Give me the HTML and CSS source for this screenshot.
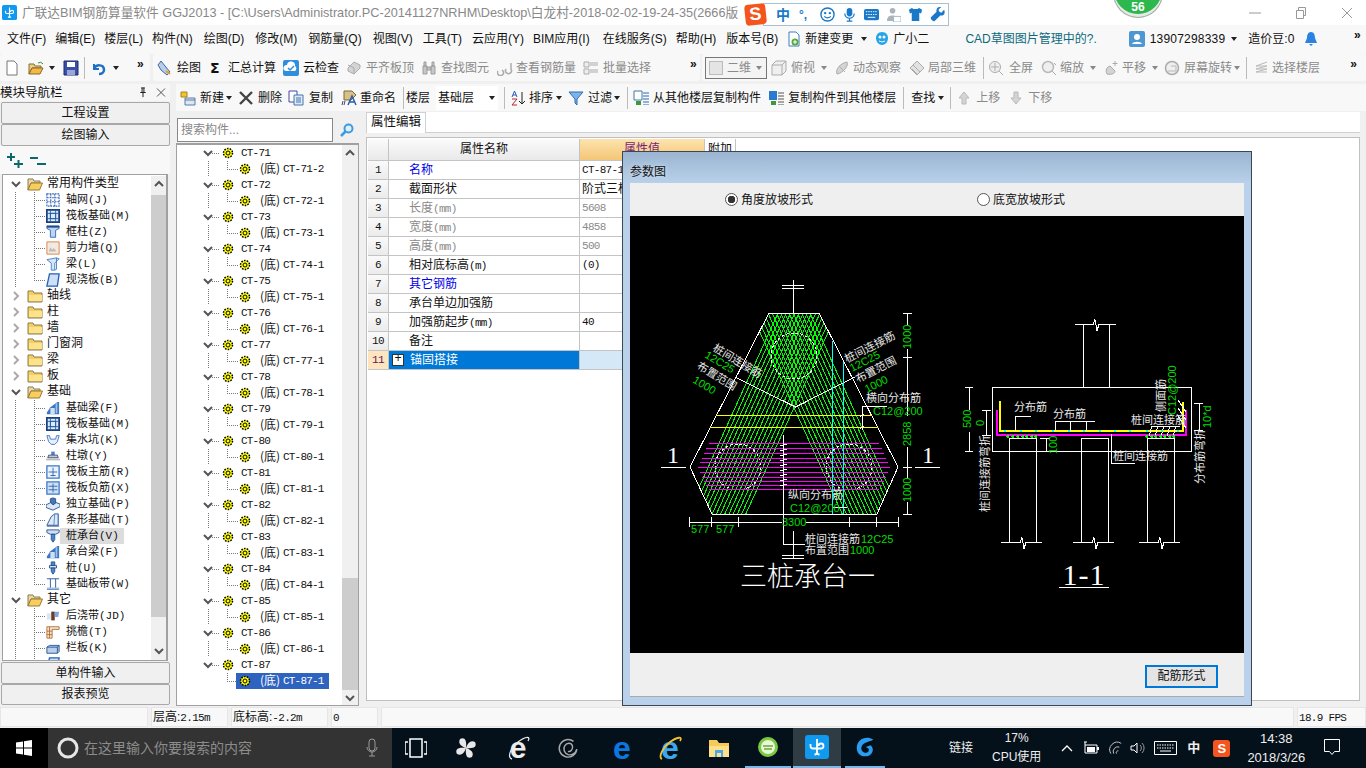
FILE: index.html
```html
<!DOCTYPE html>
<html lang="zh-CN">
<head>
<meta charset="utf-8">
<title>广联达BIM钢筋算量软件 GGJ2013</title>
<link rel="stylesheet" href="styles.css">
</head>
<body>
<svg class="defs" width="0" height="0" aria-hidden="true">
  <symbol id="folder" viewBox="0 0 16 16"><path d="M1 3h5l1 2h8v9H1z" fill="#f6cf5d" stroke="#8a7a50"/><path d="M2 7h13v6H2z" fill="#fbe28c"/></symbol>
  <symbol id="folderopen" viewBox="0 0 16 16"><path d="M1 3h5l1 2h6v2H4L1 14z" fill="#e8d9a8" stroke="#8a7a50"/><path d="M4 7h11.500l-3 7H1z" fill="#f8cf5e" stroke="#9a7a30"/></symbol>
  <symbol id="chevd" viewBox="0 0 10 10"><path d="M1 3l4 4 4-4" fill="none" stroke="#555" stroke-width="2"/></symbol>
  <symbol id="chevr" viewBox="0 0 10 10"><path d="M3 1l4 4-4 4" fill="none" stroke="#aaa" stroke-width="2"/></symbol>
  <symbol id="chevu" viewBox="0 0 10 10"><path d="M1 7l4-4 4 4" fill="none" stroke="#555" stroke-width="2"/></symbol>
  <symbol id="gear" viewBox="0 0 12 12"><circle cx="6" cy="6" r="4.500" fill="#ff0" stroke="#000" stroke-width="1.500" stroke-dasharray="1.600 1.200"/><circle cx="6" cy="6" r="2" fill="#ff0" stroke="#000"/></symbol>
  <symbol id="grid" viewBox="0 0 16 16"><path d="M1 1h14v14H1zM1 5.500h14M1 10h14M5.500 1v14M10 1v14" fill="none" stroke="#2f62b8" stroke-width="1.200" stroke-dasharray="2 1"/></symbol>
  <symbol id="raft" viewBox="0 0 16 16"><path d="M1 1h14v14H1z" fill="#dfe9f7" stroke="#1d3f7a" stroke-width="2"/><path d="M5 5h6v6H5zM1 5h14M1 11h14M5 1v14M11 1v14" fill="none" stroke="#1d5fa8"/></symbol>
  <symbol id="col" viewBox="0 0 16 16"><path d="M1 1h14v3l-4 2v8H5V6L1 4z" fill="#bcd5f2" stroke="#2a62ad"/><path d="M1 2h14" stroke="#1d4a8a" stroke-width="2"/></symbol>
  <symbol id="wall" viewBox="0 0 16 16"><path d="M1 1h14v14H1z" fill="#f3eadf" stroke="#d37b45"/><path d="M3 12l2-5 2 3 2-2 3 4z" fill="#bbb"/></symbol>
  <symbol id="beam" viewBox="0 0 16 16"><path d="M1 3l11-2 3 1-5 5v8H6V7z" fill="#d6e6f8" stroke="#3e7bc0"/><path d="M12 1v13l-2 1" fill="none" stroke="#3e7bc0"/></symbol>
  <symbol id="slab" viewBox="0 0 16 16"><path d="M4 1h11l-2 14H1z" fill="#cfe0f6" stroke="#2360b8" stroke-width="1.500"/></symbol>
  <symbol id="fbeam" viewBox="0 0 16 16"><path d="M5 7l8-6h2v14H1V13z" fill="#3c78c0"/><path d="M5 8h5v7H5z" fill="#cfe0f6"/><path d="M11 3l2-1v12h-2z" fill="#9cc0ea"/></symbol>
  <symbol id="pit" viewBox="0 0 16 16"><path d="M1 3h3l1 4h6l1-4h3l-2 7-3 3H6l-3-3z" fill="#e5eef9" stroke="#3a6fc0"/></symbol>
  <symbol id="pier" viewBox="0 0 16 16"><path d="M6 3h4v4H6z" fill="#4a83c8"/><path d="M3 7h10l1 3H2z" fill="#b5cde9" stroke="#446"/><path d="M0 11h16v2H0z" fill="#bbb"/></symbol>
  <symbol id="rfa" viewBox="0 0 16 16"><path d="M1 1h14v14H1z" fill="#eaf2fc" stroke="#3c78c8" stroke-width="1.500"/><path d="M3 8h10M8 3v10M5 12h6" stroke="#2a62ad" fill="none"/></symbol>
  <symbol id="rfb" viewBox="0 0 16 16"><path d="M1 1h14v14H1z" fill="#cfe0f6" stroke="#3c78c8" stroke-width="1.500"/><path d="M3 6h10M3 10h10M8 3v10" stroke="#2a62ad" fill="none"/></symbol>
  <symbol id="iso" viewBox="0 0 16 16"><path d="M0 9l8-4 8 3v3l-8 4-8-3z" fill="#dbe8f7" stroke="#24508f"/><path d="M5 6V2l3-1 3 1v5l-3 2z" fill="#4677b5" stroke="#24508f"/></symbol>
  <symbol id="strip" viewBox="0 0 16 16"><path d="M1 14l5-10 4-3h4v13z" fill="#dfeaf8" stroke="#234e90"/><path d="M10 1l-1 13M14 1v13" stroke="#4d86cc" fill="none"/><path d="M1 15h14" stroke="#234e90"/></symbol>
  <symbol id="cap" viewBox="0 0 16 16"><path d="M1 1h14v3l-4 2H5L1 4z" fill="#cfe0f6" stroke="#234e90"/><path d="M6 6h4v6l-2 3-2-3z" fill="#4c86c8" stroke="#234e90"/></symbol>
  <symbol id="pile" viewBox="0 0 16 16"><path d="M4 5h8v3H4z" fill="#cfe0f6" stroke="#234e90"/><path d="M6 1h4v4H6zM6 8h4v4l-2 3-2-3z" fill="#4c86c8" stroke="#234e90"/></symbol>
  <symbol id="band" viewBox="0 0 16 16"><path d="M1 2h14M1 14h14M5 2v12M11 2v12" stroke="#234e90" fill="none"/><path d="M1 12h14v2H1z" fill="#9cc0ea"/></symbol>
  <symbol id="post" viewBox="0 0 16 16"><path d="M1 5h5v7H1z" fill="#d8e5f5"/><path d="M6 3h4v10H6z" fill="#6b3c24"/><path d="M10 3h5l-1 6h-4z" fill="#7ea8dc"/></symbol>
  <symbol id="eave" viewBox="0 0 16 16"><path d="M1 2h14v3H7v10H1z" fill="#f6e4cf" stroke="#b06a30"/><path d="M1 7h6M1 11h6M4 2v13" stroke="#b06a30"/></symbol>
  <symbol id="rail" viewBox="0 0 16 16"><path d="M1 7l3-2h11v7l-2 2H1z" fill="#b8d0ee" stroke="#234e90"/><path d="M1 7h12v7M13 7l2-2" fill="none" stroke="#234e90"/></symbol>
  <symbol id="gld" viewBox="0 0 24 24"><rect width="24" height="24" rx="3" fill="#0f9af0"/><path d="M12 4v13a2.500 2.500 0 0 0 2.500 2.500M9.500 19.500A2.500 2.500 0 0 0 12 17M5.500 9v2a2.500 2.500 0 0 0 2.500 2.500h8a2.500 2.500 0 0 0 2.500-2.500 2.500 2.500 0 0 0-5 0" fill="none" stroke="#fff" stroke-width="1.800"/></symbol>
</svg>

<div class="titlebar">
  <svg class="appicon"><use href="#gld"/></svg>
  <span class="wintitle">广联达BIM钢筋算量软件 GGJ2013 - [C:\Users\Administrator.PC-20141127NRHM\Desktop\白龙村-2018-02-02-19-24-35(2666版</span>
  <span class="wincontrols">
    <svg viewBox="0 0 12 12"><path d="M0 6h12" stroke="#999"/></svg>
    <svg viewBox="0 0 12 12"><path d="M1.500 3.500h7v8h-7zM3.500 3.500v-3h7v8h-2" fill="none" stroke="#999"/></svg>
    <svg viewBox="0 0 12 12"><path d="M1 1l10 10M11 1L1 11" stroke="#999"/></svg>
  </span>
</div>

<div class="menubar">
  <span class="mi">文件(F)</span><span class="mi ml9">编辑(E)</span><span class="mi ml9">楼层(L)</span><span class="mi ml9">构件(N)</span><span class="mi ml11">绘图(D)</span><span class="mi ml11">修改(M)</span><span class="mi ml11">钢筋量(Q)</span><span class="mi ml11">视图(V)</span><span class="mi ml10">工具(T)</span><span class="mi ml10">云应用(Y)</span><span class="mi ml9">BIM应用(I)</span><span class="mi ml13">在线服务(S)</span><span class="mi ml9">帮助(H)</span><span class="mi ml10">版本号(B)</span>
  <svg class="ic ml8" viewBox="0 0 16 16"><path d="M3 1h7l3 3v11H3z" fill="#fff" stroke="#3a7fc8"/><circle cx="9" cy="11" r="3.500" fill="#5aa83a"/><path d="M7 11h4M9 9v4" stroke="#fff"/></svg>
  <span class="mi ml3">新建变更</span><span class="car ml8"></span>
  <svg class="ic ml7" viewBox="0 0 16 16"><path d="M8 1c4 0 6 3 6 6s-2 7-6 7-6-4-6-7 2-6 6-6z" fill="#25a4ea"/><circle cx="6" cy="6" r="1.500" fill="#fff"/><circle cx="10" cy="6" r="1.500" fill="#fff"/><path d="M5 10q3 2 6 0" fill="none" stroke="#fff"/></svg>
  <span class="mi ml3">广小二</span>
  <span class="mi teal">CAD草图图片管理中的?.</span>
  <svg class="ic avatar" viewBox="0 0 16 16"><rect width="16" height="16" rx="2" fill="#4f97d2"/><circle cx="8" cy="6" r="3" fill="#fff"/><path d="M3 13c1-3 9-3 10 0z" fill="#fff"/></svg>
  <span class="mi ml5 phone">13907298339</span><span class="car ml6"></span>
  <span class="mi ml11">造价豆:0</span>
  <svg class="ic ml9" viewBox="0 0 16 16"><path d="M8 1c3 0 4 3 4 6l2 5H2l2-5c0-3 1-6 4-6z" fill="#2b82e0"/><path d="M6 13h4l-2 2z" fill="#2b82e0"/></svg>
  <span class="more push">»</span>
</div>

<div class="toolbars">
  <div class="chunk chunk1">
    <svg class="ic ml4" viewBox="0 0 16 16"><path d="M3 1h7l3 3v11H3z" fill="#fff" stroke="#777"/></svg>
    <svg class="ic ml8" viewBox="0 0 16 16"><path d="M1 4h5l1 2h6v2H4L1 14z" fill="#e8cf8f" stroke="#8a6a20"/><path d="M4 8h11l-3 6H1z" fill="#f2b944" stroke="#8a6a20"/><path d="M10 3q3-2 5 1" fill="none" stroke="#3a8a3a"/></svg>
    <span class="car ml5"></span>
    <svg class="ic ml8" viewBox="0 0 16 16"><path d="M1 1h14v14H1z" fill="#3a50a8" stroke="#1c2a6a"/><path d="M4 2h8v5H4z" fill="#fff"/><path d="M4 10h8v5H4z" fill="#9aa8d8"/></svg>
    <span class="sep ml5"></span>
    <svg class="ic ml6" viewBox="0 0 16 16"><path d="M3 4v5h5" fill="none" stroke="#1f6fc8" stroke-width="2"/><path d="M3 9c2-5 10-5 10 1 0 3-3 4-5 4" fill="none" stroke="#1f6fc8" stroke-width="2.500"/></svg>
    <span class="car ml6"></span>
    <span class="more ml18">»</span>
  </div>
  <div class="chunk chunk2">
    <svg class="ic ml4" viewBox="0 0 16 16"><path d="M4 1l4 5 5 6-3 3-6-5-3-5z" fill="#b9cfe8" stroke="#3a68a8"/><path d="M9 11l4 3" stroke="#e0a030" stroke-width="2"/></svg>
    <span class="tx ml4">绘图</span>
    <span class="sigma ml9">Σ</span>
    <span class="tx ml8">汇总计算</span>
    <svg class="ic ml7" viewBox="0 0 16 16"><rect width="16" height="16" rx="2" fill="#2f8fdc"/><path d="M3 11a3 3 0 0 1 1-6 4 4 0 0 1 8 1 3 3 0 0 1 0 5z" fill="#fff"/><path d="M5 8l2 2 4-4" fill="none" stroke="#2f8fdc" stroke-width="1.500"/></svg>
    <span class="tx ml4">云检查</span>
    <svg class="ic ml7 dis" viewBox="0 0 16 16"><path d="M2 8l6-6 6 3v3l-6 6-6-3z" fill="#ccc" stroke="#999"/><path d="M8 14V8L2 5" fill="none" stroke="#999"/></svg>
    <span class="tx ml4 off">平齐板顶</span>
    <svg class="ic ml7 dis" viewBox="0 0 16 16"><path d="M2 6h4v8H2zM10 6h4v8h-4zM3 2h2v4H3zM11 2h2v4h-2zM6 7h4v3H6z" fill="#bbb" stroke="#888"/></svg>
    <span class="tx ml4 off">查找图元</span>
    <svg class="ic ml8 dis" viewBox="0 0 16 16"><path d="M1 11a3 3 0 1 0 5 0l-1-1M9 9a3 3 0 1 0 5 0V3" fill="none" stroke="#999" stroke-width="1.500"/></svg>
    <span class="tx ml3 off">查看钢筋量</span>
    <svg class="ic ml7 dis" viewBox="0 0 16 16"><path d="M1 2h5v5H1zM1 9h5v5H1zM7 3h8M7 5h8M7 10h8M7 12h8" fill="#eee" stroke="#999"/></svg>
    <span class="tx ml4 off">批量选择</span>
    <span class="more ml39">»</span>
  </div>
  <div class="chunk chunk3">
    <span class="combo ml3"><span class="swatch"></span><span class="tx off ml4">二维</span><span class="car graycar ml5"></span></span>
    <svg class="ic ml4 dis" viewBox="0 0 16 16"><path d="M1 5h10v10H1zM1 5l4-4h10v10l-4 4M11 5l4-4" fill="#eee" stroke="#999"/></svg>
    <span class="tx ml4 off">俯视</span><span class="car graycar ml6"></span>
    <svg class="ic ml7 dis" viewBox="0 0 16 16"><path d="M3 14C1 9 7 3 13 2c2 4-4 11-10 12z" fill="#ccc" stroke="#999"/><path d="M5 6l6 6" stroke="#999"/></svg>
    <span class="tx ml3 off">动态观察</span>
    <svg class="ic ml8 dis" viewBox="0 0 16 16"><path d="M1 8l7-7 7 7-7 7z" fill="#ddd" stroke="#999"/><path d="M4 5l7 7M8 1l5 5M3 9l5 5" stroke="#999"/></svg>
    <span class="tx ml3 off">局部三维</span>
    <span class="sep ml7"></span>
    <svg class="ic ml4 dis" viewBox="0 0 16 16"><circle cx="7" cy="7" r="5.500" fill="#eee" stroke="#999"/><path d="M7 3v8M3 7h8M11 11l4 4" stroke="#999"/></svg>
    <span class="tx ml5 off">全屏</span>
    <svg class="ic ml8 dis" viewBox="0 0 16 16"><circle cx="7" cy="7" r="5.500" fill="#eee" stroke="#aaa" stroke-width="1.500"/><path d="M11 11l4 4M13 3l2 2" stroke="#999"/></svg>
    <span class="tx ml3 off">缩放</span><span class="car graycar ml6"></span>
    <svg class="ic ml7 dis" viewBox="0 0 16 16"><path d="M4 14c-2-4 0-7 3-8l5 5c0 2-2 4-8 3z" fill="#ccc" stroke="#999"/><path d="M12 1v5M9.500 3.500h5" stroke="#999"/></svg>
    <span class="tx ml3 off">平移</span><span class="car graycar ml6"></span>
    <svg class="ic ml6 dis" viewBox="0 0 16 16"><circle cx="8" cy="8" r="6.500" fill="#eee" stroke="#999" stroke-width="1.500"/><path d="M4 11h8V6H7" fill="none" stroke="#aaa"/></svg>
    <span class="tx ml4 off">屏幕旋转</span><span class="car graycar ml2"></span>
    <span class="sep ml6"></span>
    <svg class="ic ml6 dis" viewBox="0 0 16 16"><path d="M14 2L3 6h11M14 6L3 9h11M14 9L3 12h11" fill="none" stroke="#aaa"/></svg>
    <span class="tx ml3 off">选择楼层</span>
    <span class="more ml30">»</span>
  </div>
</div>

<div class="main">
  <aside class="nav">
    <div class="navhead">
      <span class="navtitle">模块导航栏</span>
      <svg class="navbtn pin" viewBox="0 0 10 12"><path d="M3 1h4M4 1v5M6 1v5M2 6h6M5 6v5" fill="none" stroke="#111"/></svg>
      <svg class="navbtn close" viewBox="0 0 10 10"><path d="M1 1l8 8M9 1L1 9" stroke="#555"/></svg>
    </div>
    <div class="navtab">工程设置</div>
    <div class="navtab">绘图输入</div>
    <div class="navtools">
      <svg class="pm" viewBox="0 0 16 15"><path d="M0 4h8M4 0v8M7 11h9M11.500 7v8" stroke="#0a6a6a" stroke-width="2"/></svg>
      <svg class="pm ml7" viewBox="0 0 16 15"><path d="M0 5h8M7 11h9" stroke="#0a6a6a" stroke-width="2"/></svg>
    </div>
    <div class="treebox">
      <div class="tree">
        <div class="tr"><svg class="chev"><use href="#chevd"/></svg><svg class="fold"><use href="#folderopen"/></svg><span class="lab">常用构件类型</span></div>
        <div class="tr ch"><svg class="ti"><use href="#grid"/></svg><span class="clab">轴网(J)</span></div>
        <div class="tr ch"><svg class="ti"><use href="#raft"/></svg><span class="clab">筏板基础(M)</span></div>
        <div class="tr ch"><svg class="ti"><use href="#col"/></svg><span class="clab">框柱(Z)</span></div>
        <div class="tr ch"><svg class="ti"><use href="#wall"/></svg><span class="clab">剪力墙(Q)</span></div>
        <div class="tr ch"><svg class="ti"><use href="#beam"/></svg><span class="clab">梁(L)</span></div>
        <div class="tr ch last"><svg class="ti"><use href="#slab"/></svg><span class="clab">现浇板(B)</span></div>
        <div class="tr"><svg class="chev"><use href="#chevr"/></svg><svg class="fold"><use href="#folder"/></svg><span class="lab">轴线</span></div>
        <div class="tr"><svg class="chev"><use href="#chevr"/></svg><svg class="fold"><use href="#folder"/></svg><span class="lab">柱</span></div>
        <div class="tr"><svg class="chev"><use href="#chevr"/></svg><svg class="fold"><use href="#folder"/></svg><span class="lab">墙</span></div>
        <div class="tr"><svg class="chev"><use href="#chevr"/></svg><svg class="fold"><use href="#folder"/></svg><span class="lab">门窗洞</span></div>
        <div class="tr"><svg class="chev"><use href="#chevr"/></svg><svg class="fold"><use href="#folder"/></svg><span class="lab">梁</span></div>
        <div class="tr"><svg class="chev"><use href="#chevr"/></svg><svg class="fold"><use href="#folder"/></svg><span class="lab">板</span></div>
        <div class="tr"><svg class="chev"><use href="#chevd"/></svg><svg class="fold"><use href="#folderopen"/></svg><span class="lab">基础</span></div>
        <div class="tr ch"><svg class="ti"><use href="#fbeam"/></svg><span class="clab">基础梁(F)</span></div>
        <div class="tr ch"><svg class="ti"><use href="#raft"/></svg><span class="clab">筏板基础(M)</span></div>
        <div class="tr ch"><svg class="ti"><use href="#pit"/></svg><span class="clab">集水坑(K)</span></div>
        <div class="tr ch"><svg class="ti"><use href="#pier"/></svg><span class="clab">柱墩(Y)</span></div>
        <div class="tr ch"><svg class="ti"><use href="#rfa"/></svg><span class="clab">筏板主筋(R)</span></div>
        <div class="tr ch"><svg class="ti"><use href="#rfb"/></svg><span class="clab">筏板负筋(X)</span></div>
        <div class="tr ch"><svg class="ti"><use href="#iso"/></svg><span class="clab">独立基础(P)</span></div>
        <div class="tr ch"><svg class="ti"><use href="#strip"/></svg><span class="clab">条形基础(T)</span></div>
        <div class="tr ch hit"><svg class="ti"><use href="#cap"/></svg><span class="clab">桩承台(V)</span></div>
        <div class="tr ch"><svg class="ti"><use href="#fbeam"/></svg><span class="clab">承台梁(F)</span></div>
        <div class="tr ch"><svg class="ti"><use href="#pile"/></svg><span class="clab">桩(U)</span></div>
        <div class="tr ch last"><svg class="ti"><use href="#band"/></svg><span class="clab">基础板带(W)</span></div>
        <div class="tr"><svg class="chev"><use href="#chevd"/></svg><svg class="fold"><use href="#folderopen"/></svg><span class="lab">其它</span></div>
        <div class="tr ch"><svg class="ti"><use href="#post"/></svg><span class="clab">后浇带(JD)</span></div>
        <div class="tr ch"><svg class="ti"><use href="#eave"/></svg><span class="clab">挑檐(T)</span></div>
        <div class="tr ch"><svg class="ti"><use href="#rail"/></svg><span class="clab">栏板(K)</span></div>
        <div class="tr ch"><svg class="ti"><use href="#slab"/></svg></div>
      </div>
      <div class="sb sb1"><svg class="sba"><use href="#chevu"/></svg><span class="thumb th1"></span><svg class="sba flip"><use href="#chevu"/></svg></div>
    </div>
    <div class="navtab navtab-b">单构件输入</div>
    <div class="navtab navtab-l">报表预览</div>
  </aside>

  <div class="work">
    <div class="tb2">
      <svg class="ic ml4" viewBox="0 0 16 16"><path d="M1 2h6v5H1z" fill="#f2c230" stroke="#a8841a"/><path d="M5 8h10v7H5z" fill="#dfe6f2" stroke="#5a7ca8"/><path d="M5 10h10" stroke="#5a7ca8"/></svg>
      <span class="tx ml4">新建</span><span class="car ml2"></span>
      <svg class="ic ml6" viewBox="0 0 16 16"><path d="M2 2l12 12M14 2L2 14" stroke="#444" stroke-width="2.400"/></svg>
      <span class="tx ml4">删除</span>
      <svg class="ic ml6" viewBox="0 0 16 16"><path d="M1 1h8v11H1z" fill="#fff" stroke="#44a"/><path d="M6 5h9v10H6z" fill="#dfe9f7" stroke="#47a"/><path d="M8 8h5M8 10h5M8 12h5" stroke="#47a"/></svg>
      <span class="tx ml5">复制</span>
      <svg class="ic ml8" viewBox="0 0 16 16"><path d="M3 1h8l4 4-5 5H3z" fill="#d8c08a" stroke="#7a6a30"/><path d="M1 15l1-4M3 15l1-4" stroke="#447"/><path d="M7 15l4-9 4 9M9 12h4" fill="none" stroke="#2a5aa8" stroke-width="1.500"/></svg>
      <span class="tx ml3">重命名</span>
      <span class="sep ml7"></span>
      <span class="tx ml2">楼层</span>
      <span class="floor ml6"><span class="tx ml2">基础层</span><span class="car ml15"></span></span>
      <span class="sep ml6"></span>
      <svg class="ic ml5" viewBox="0 0 16 16"><path d="M12 2v12M9 11l3 3 3-3" fill="none" stroke="#222"/><path d="M2 7l2.500-6L7 7M3 5h3" fill="none" stroke="#2a5ab8"/><path d="M2 9h5l-5 6h5" fill="none" stroke="#b82a2a"/></svg>
      <span class="tx ml3">排序</span><span class="car ml3"></span>
      <svg class="ic ml6" viewBox="0 0 16 16"><path d="M1 2h14L9 9v6l-2-2V9z" fill="#7fb4e6" stroke="#2a6cb8"/></svg>
      <span class="tx ml4">过滤</span><span class="car ml2"></span>
      <span class="sep ml7"></span>
      <svg class="ic ml5" viewBox="0 0 16 16"><path d="M1 1h8v9H1z" fill="#fff" stroke="#47a"/><path d="M3 11h5v4H3z" fill="#3a9a3a"/><path d="M11 2v13M13 2v13M15 2v13" stroke="#2a6cb8" stroke-dasharray="2 1"/></svg>
      <span class="tx ml4">从其他楼层复制构件</span>
      <svg class="ic ml7" viewBox="0 0 16 16"><path d="M1 1h8v9H1z" fill="#2a7ad0"/><path d="M3 11h5v4H3z" fill="#3a9a3a"/><path d="M11 2v13M13 2v13M15 2v13" stroke="#555" stroke-dasharray="2 1"/></svg>
      <span class="tx ml4">复制构件到其他楼层</span>
      <span class="sep ml7"></span>
      <span class="tx ml7">查找</span><span class="car ml3"></span>
      <span class="sep ml6"></span>
      <svg class="ic ml5 dis" viewBox="0 0 16 16"><path d="M8 2l5 6h-3v6H6V8H3z" fill="#ccc" stroke="#aaa"/></svg>
      <span class="tx ml4 off">上移</span>
      <svg class="ic ml8 dis" viewBox="0 0 16 16"><path d="M8 14l5-6h-3V2H6v6H3z" fill="#ccc" stroke="#aaa"/></svg>
      <span class="tx ml4 off">下移</span>
    </div>
    <div class="panes">
      <section class="col2">
        <div class="searchrow">
          <span class="searchbox">搜索构件...</span>
          <svg class="searchic" viewBox="0 0 14 14"><circle cx="8.500" cy="5.500" r="4" fill="#dff0fb" stroke="#3e9be0" stroke-width="2"/><path d="M5.500 8.500L1 13" stroke="#3e9be0" stroke-width="2.500"/></svg>
        </div>
        <div class="ctbox">
          <div class="ctree">
            <div class="cp"><svg class="chev"><use href="#chevd"/></svg><svg class="gear"><use href="#gear"/></svg><span class="cpl">CT-71</span></div>
            <div class="cc"><svg class="gear"><use href="#gear"/></svg><i class="di">(底)</i><span>CT-71-2</span></div>
            <div class="cp"><svg class="chev"><use href="#chevd"/></svg><svg class="gear"><use href="#gear"/></svg><span class="cpl">CT-72</span></div>
            <div class="cc"><svg class="gear"><use href="#gear"/></svg><i class="di">(底)</i><span>CT-72-1</span></div>
            <div class="cp"><svg class="chev"><use href="#chevd"/></svg><svg class="gear"><use href="#gear"/></svg><span class="cpl">CT-73</span></div>
            <div class="cc"><svg class="gear"><use href="#gear"/></svg><i class="di">(底)</i><span>CT-73-1</span></div>
            <div class="cp"><svg class="chev"><use href="#chevd"/></svg><svg class="gear"><use href="#gear"/></svg><span class="cpl">CT-74</span></div>
            <div class="cc"><svg class="gear"><use href="#gear"/></svg><i class="di">(底)</i><span>CT-74-1</span></div>
            <div class="cp"><svg class="chev"><use href="#chevd"/></svg><svg class="gear"><use href="#gear"/></svg><span class="cpl">CT-75</span></div>
            <div class="cc"><svg class="gear"><use href="#gear"/></svg><i class="di">(底)</i><span>CT-75-1</span></div>
            <div class="cp"><svg class="chev"><use href="#chevd"/></svg><svg class="gear"><use href="#gear"/></svg><span class="cpl">CT-76</span></div>
            <div class="cc"><svg class="gear"><use href="#gear"/></svg><i class="di">(底)</i><span>CT-76-1</span></div>
            <div class="cp"><svg class="chev"><use href="#chevd"/></svg><svg class="gear"><use href="#gear"/></svg><span class="cpl">CT-77</span></div>
            <div class="cc"><svg class="gear"><use href="#gear"/></svg><i class="di">(底)</i><span>CT-77-1</span></div>
            <div class="cp"><svg class="chev"><use href="#chevd"/></svg><svg class="gear"><use href="#gear"/></svg><span class="cpl">CT-78</span></div>
            <div class="cc"><svg class="gear"><use href="#gear"/></svg><i class="di">(底)</i><span>CT-78-1</span></div>
            <div class="cp"><svg class="chev"><use href="#chevd"/></svg><svg class="gear"><use href="#gear"/></svg><span class="cpl">CT-79</span></div>
            <div class="cc"><svg class="gear"><use href="#gear"/></svg><i class="di">(底)</i><span>CT-79-1</span></div>
            <div class="cp"><svg class="chev"><use href="#chevd"/></svg><svg class="gear"><use href="#gear"/></svg><span class="cpl">CT-80</span></div>
            <div class="cc"><svg class="gear"><use href="#gear"/></svg><i class="di">(底)</i><span>CT-80-1</span></div>
            <div class="cp"><svg class="chev"><use href="#chevd"/></svg><svg class="gear"><use href="#gear"/></svg><span class="cpl">CT-81</span></div>
            <div class="cc"><svg class="gear"><use href="#gear"/></svg><i class="di">(底)</i><span>CT-81-1</span></div>
            <div class="cp"><svg class="chev"><use href="#chevd"/></svg><svg class="gear"><use href="#gear"/></svg><span class="cpl">CT-82</span></div>
            <div class="cc"><svg class="gear"><use href="#gear"/></svg><i class="di">(底)</i><span>CT-82-1</span></div>
            <div class="cp"><svg class="chev"><use href="#chevd"/></svg><svg class="gear"><use href="#gear"/></svg><span class="cpl">CT-83</span></div>
            <div class="cc"><svg class="gear"><use href="#gear"/></svg><i class="di">(底)</i><span>CT-83-1</span></div>
            <div class="cp"><svg class="chev"><use href="#chevd"/></svg><svg class="gear"><use href="#gear"/></svg><span class="cpl">CT-84</span></div>
            <div class="cc"><svg class="gear"><use href="#gear"/></svg><i class="di">(底)</i><span>CT-84-1</span></div>
            <div class="cp"><svg class="chev"><use href="#chevd"/></svg><svg class="gear"><use href="#gear"/></svg><span class="cpl">CT-85</span></div>
            <div class="cc"><svg class="gear"><use href="#gear"/></svg><i class="di">(底)</i><span>CT-85-1</span></div>
            <div class="cp"><svg class="chev"><use href="#chevd"/></svg><svg class="gear"><use href="#gear"/></svg><span class="cpl">CT-86</span></div>
            <div class="cc"><svg class="gear"><use href="#gear"/></svg><i class="di">(底)</i><span>CT-86-1</span></div>
            <div class="cp"><svg class="chev"><use href="#chevd"/></svg><svg class="gear"><use href="#gear"/></svg><span class="cpl">CT-87</span></div>
            <div class="cc cclast"><span class="sel"><svg class="gear"><use href="#gear"/></svg><i class="di">(底)</i><span>CT-87-1</span></span></div>
          </div>
          <div class="sb sb2"><svg class="sba"><use href="#chevu"/></svg><span class="thumb th2"></span><svg class="sba flip"><use href="#chevu"/></svg></div>
        </div>
      </section>
      <section class="col3">
        <div class="tabs"><span class="tab">属性编辑</span></div>
        <div class="tablebox">
          <div class="grid">
            <div class="hc"></div><div class="hc">属性名称</div><div class="hc hv">属性值</div><div class="hc hx">附加</div>
            <div class="num">1</div><div class="nm blue">名称</div><div class="val">CT-87-1</div><div class="ex"></div>
            <div class="num">2</div><div class="nm">截面形状</div><div class="val cj">阶式三桩承台</div><div class="ex"></div>
            <div class="num">3</div><div class="nm gray">长度<i class="m">(mm)</i></div><div class="val gray">5608</div><div class="ex"></div>
            <div class="num">4</div><div class="nm gray">宽度<i class="m">(mm)</i></div><div class="val gray">4858</div><div class="ex"></div>
            <div class="num">5</div><div class="nm gray">高度<i class="m">(mm)</i></div><div class="val gray">500</div><div class="ex"></div>
            <div class="num">6</div><div class="nm">相对底标高<i class="m">(m)</i></div><div class="val">(0)</div><div class="ex"></div>
            <div class="num">7</div><div class="nm blue">其它钢筋</div><div class="val"></div><div class="ex"></div>
            <div class="num">8</div><div class="nm">承台单边加强筋</div><div class="val"></div><div class="ex"></div>
            <div class="num">9</div><div class="nm">加强筋起步<i class="m">(mm)</i></div><div class="val">40</div><div class="ex"></div>
            <div class="num">10</div><div class="nm">备注</div><div class="val"></div><div class="ex"></div>
            <div class="num cur">11</div><div class="nm selrow"><span class="plus">+</span>锚固搭接</div><div class="val selval"></div><div class="ex selval"></div>
          </div>
        </div>
      </section>
    </div>
  </div>
</div>

<div class="status">
  <span class="cell c0"></span>
  <span class="cell c1">层高:<i class="m">2.15m</i></span>
  <span class="cell c2">底标高:<i class="m">-2.2m</i></span>
  <span class="cell c3"><i class="m">0</i></span>
  <span class="cell c4"></span>
  <span class="cell c5"><i class="m">18.9 FPS</i></span>
</div>

<div class="taskbar">
  <span class="start"><svg class="win" viewBox="0 0 16 16"><path d="M0 2.500l7-1v6H0zM8 1.300L16 0v7.500H8zM0 8.500h7v6l-7-1zM8 8.500h8V16l-8-1.300z" fill="#fff"/></svg></span>
  <span class="search">
    <svg class="cort" viewBox="0 0 22 22"><circle cx="11" cy="11" r="9" fill="none" stroke="#e6e6e6" stroke-width="3"/></svg>
    <span class="searchtx">在这里输入你要搜索的内容</span>
    <svg class="mic" viewBox="0 0 12 20"><rect x="3" y="1" width="6" height="12" rx="3" fill="none" stroke="#999"/><path d="M1 9a5 5 0 0 0 10 0M6 14v4M3 18h6" fill="none" stroke="#999"/></svg>
  </span>
  <span class="tk"><svg class="tki" viewBox="0 0 22 20"><path d="M5 1h12v18H5zM3 4H0v12h3M19 4h3v12h-3" fill="none" stroke="#fff" stroke-width="1.500"/></svg></span>
  <span class="tk ml2"><svg class="tki" viewBox="0 0 22 22"><path d="M11 11C5 9 3 6 5 2c4-2 7 0 6 9zM11 11c2-6 5-8 9-6 2 4 0 7-9 6zM11 11c6 2 8 5 6 9-4 2-7 0-6-9zM11 11c-2 6-5 8-9 6-2-4 0-7 9-6z" fill="#e8e8e8"/></svg></span>
  <span class="tk ml4 ebig">e<svg class="swoosh" viewBox="0 0 24 24"><path d="M6 23C1 22 4 12 12 6s13-6 10-1" fill="none" stroke="#e8e8e8" stroke-width="1.300"/></svg></span>
  <span class="tk ml2"><svg class="tki" viewBox="0 0 20 20"><path d="M15 4a8 8 0 1 0 3 7c-1 4-5 6-8 5s-5-5-3-8 6-3 7 0-2 6-4 5" fill="none" stroke="#aaa" stroke-width="1.300"/></svg></span>
  <span class="tk ml6 eedge">e</span>
  <span class="tk eie">e<svg class="swoosh" viewBox="0 0 24 24"><path d="M4 23C0 21 5 11 12 6s13-6 10-1" fill="none" stroke="#f2c230" stroke-width="1.800"/></svg></span>
  <span class="tk ml1"><svg class="tki" viewBox="0 0 22 20"><path d="M1 2h8l2 3h10v14H1z" fill="#f5c95a"/><path d="M1 8h20v11H1z" fill="#ffe08a"/><path d="M7 12h8v7h-2v-4H9v4H7z" fill="#4aa7e8"/></svg></span>
  <span class="tk under"><svg class="tki" viewBox="0 0 22 22"><circle cx="11" cy="11" r="10" fill="#7ac943"/><circle cx="11" cy="11" r="7" fill="#e8f7d8"/><path d="M6 10h10M7 13h8" stroke="#6aa83a" stroke-width="1.500"/></svg></span>
  <span class="tk tkactive ml2"><svg class="gldt"><use href="#gld"/></svg></span>
  <span class="tk under2 ml4"><svg class="tki" viewBox="0 0 22 24"><path d="M20 4C12-1 2 4 2 13c0 7 6 10 11 9 6-1 9-8 4-12l-5 2 3 2c1 3-2 5-5 4s-4-5-2-8 8-4 12-6z" fill="#2a9df0"/></svg></span>
  <span class="tray">
    <span class="tt ml64">链接</span>
    <span class="cpu ml19"><b>17%</b><b>CPU使用</b></span>
    <svg class="tr-i chevup ml20" viewBox="0 0 12 8"><path d="M1 7l5-5 5 5" fill="none" stroke="#fff" stroke-width="1.300"/></svg>
    <svg class="tr-i batt ml9" viewBox="0 0 18 14"><path d="M2 1h3M3 1v3M3 4h12v8H3z" stroke="#fff" fill="none"/><path d="M5 6h8v5H5z" fill="#fff"/><path d="M15 6h2v3h-2z" fill="#fff"/></svg>
    <svg class="tr-i wifi ml9" viewBox="0 0 16 14"><path d="M2 13a8 8 0 0 1 11-11M5 13a5 5 0 0 1 6-7M8 13a2 2 0 0 1 2-3" fill="none" stroke="#ccc"/></svg>
    <svg class="tr-i spk ml6" viewBox="0 0 16 14"><path d="M1 5h3l3-3v10L4 9H1z" fill="none" stroke="#fff"/><path d="M10 4a4 4 0 0 1 0 6M12 2a7 7 0 0 1 0 10" fill="none" stroke="#999"/></svg>
    <svg class="tr-i kbd ml8" viewBox="0 0 23 14"><path d="M.5.500h22v13H.5z" fill="none" stroke="#fff"/><path d="M3 4h17M3 7h17" stroke="#fff" stroke-dasharray="1.500 1"/><path d="M6 10h11" stroke="#fff"/></svg>
    <span class="zh ml10">中</span>
    <span class="sgs ml13">S</span>
    <span class="clock ml17"><b>14:38</b><b>2018/3/26</b></span>
    <svg class="tr-i note ml19" viewBox="0 0 16 18"><path d="M.5.500h15v12h-5l-2.500 3-2.500-3h-5z" fill="none" stroke="#fff"/></svg>
  </span>
</div>

<div class="dialog">
  <div class="dlgtitle">参数图</div>
  <div class="radios">
    <span class="radio on"></span><span class="rlab">角度放坡形式</span>
    <span class="radio second"></span><span class="rlab">底宽放坡形式</span>
  </div>
  <svg class="cad" viewBox="630 216 614 437">
    <defs>
      <clipPath id="hexclip"><path d="M769 313H819L898 467 877 514H712L690 467z"/></clipPath>
      <path id="band1" d="M687 514L778 313M691.200 514L782.200 313M695.400 514L786.400 313M699.600 514L790.600 313M703.800 514L794.800 313M708 514L799 313M712.200 514L803.200 313M716.400 514L807.400 313M720.600 514L811.600 313M724.800 514L815.800 313M729 514L820 313M733.200 514L824.200 313M737.400 514L828.400 313M741.600 514L832.600 313M745.800 514L836.800 313" fill="none" stroke="#00ff00"/>
    </defs>
    <g clip-path="url(#hexclip)">
      <use href="#band1"/>
      <use href="#band1" transform="translate(1588 0) scale(-1 1)"/>
    </g>
    <path class="wl" d="M769 313H819L898 467 877 514H712L690 467z"/>
    <path class="wd" d="M794 333a23 23 0 1 0 .01 0zM738 444a23 23 0 1 0 .01 0zM849 444a23 23 0 1 0 .01 0z"/>
    <path class="wl" d="M735 377L795.500 407 855 377"/>
    <path class="yl" d="M716 415.500H872M710 427.500H878"/>
    <path class="mg" d="M709 443.500H879M706 448.500H882M704 453.500H884M702 458H886M700 462.500H888M698 467.500H890M700 472H888M702 477H886M704 481.500H884M706 485.500H882M709 489.500H879"/>
    <path class="cy" d="M832.500 341V514M843.500 362V514"/>
    <path class="wl" d="M793.500 280V313M782 285H804M782 288.500H804M783.500 435V544H805M793.500 531V558M782 555H804M782 558.500H804M780 446l7-2M780 451l7-2M780 456l7-2M780 461l7-2M780 466l7-2M780 471l7-2M780 476l7-2M780 481l7-2M780 486l7-2"/>
    <path class="wl" d="M862 430V406H887M860 417l4-3M860 429l4-3M833 507.500H847"/>
    <path class="wl" d="M907.500 313V325M907.500 349V416M907.500 447V478M907.500 502V514M903 313.500H912M903 357.500H912M903 467.500H912M903 514.500H912M661 467.500H686M915 467.500H940"/>
    <path class="wl" d="M689.500 522.500H782M806 522.500H898.500M689.500 517V527M711.500 517V527M738.500 517V527M849.500 517V527M876.500 517V527M898.500 517V527"/>
    <g class="wt">
      <text x="866" y="402">横向分布筋</text>
      <text x="788" y="499">纵向分布筋</text>
      <text x="805" y="543">桩间连接筋</text>
      <text x="805" y="554">布置范围</text>
      <text transform="translate(712 350) rotate(31)">桩间连接筋</text>
      <text transform="translate(696 368) rotate(31)">布置范围</text>
      <text transform="translate(847 363) rotate(-27)">桩间连接筋</text>
      <text transform="translate(858 383) rotate(-27)">布置范围</text>
    </g>
    <g class="gt">
      <text x="873" y="415">C12@200</text>
      <text x="790" y="512">C12@200</text>
      <text x="861" y="543">12C25</text>
      <text x="850" y="554">1000</text>
      <text x="691" y="533">577</text>
      <text x="716" y="533">577</text>
      <text x="782" y="526">3300</text>
      <text transform="translate(704 357) rotate(31)">12C25</text>
      <text transform="translate(692 382) rotate(31)">1000</text>
      <text transform="translate(852 372) rotate(-27)">12C25</text>
      <text transform="translate(867 393) rotate(-27)">1000</text>
      <text transform="translate(911 349) rotate(-90)">1000</text>
      <text transform="translate(911 446) rotate(-90)">2858</text>
      <text transform="translate(911 502) rotate(-90)">1000</text>
    </g>
    <text class="one" x="673" y="463">1</text>
    <text class="one" x="928" y="463">1</text>
    <text class="bigt" x="740" y="586">三桩承台一</text>

    <path class="wl" d="M992.500 387.500H1191.500V451.500H992.500zM1083.500 324.500V387.500M1109.500 324.500V387.500M1075 324.500H1093l2-5 2 11 2-6H1116"/>
    <path class="mg2" d="M997 410V435H1186V410"/>
    <path class="yl2" d="M1000 401V431H1183V402"/>
    <path class="wl" d="M1009.500 542V438.500H1036.500V542M1081.500 542V438.500H1108.500V542M1147.500 542V438.500H1174.500V542"/>
    <path class="wl" d="M1001 542.500H1020l2-5 2 11 2-6H1041.500M1073 542.500H1092l2-5 2 11 2-6H1113.500M1139 542.500H1158l2-5 2 11 2-6H1179.500"/>
    <path class="wl" d="M969 387.500V410M969 432V451.500M965 387.500H973M965 451.500H973M986.500 410V435M982 410H991M982 435H991M1199 403V430M1194 403H1203M1194 430H1203"/>
    <path class="wl" d="M1015 416H1031M1015 416V431M1055 421H1095M1055 421V431M1070 421V431M1086 421V431M1152 426H1180M1152 426L1149 436M1158 426L1155 436M1164 426L1161 436M1170 426L1167 436M1176 426L1173 436M1111 434V463H1135M1040 438H1050M1046 438V451"/>
    <path class="wl" d="M1178 400L1186 412M1178 408L1186 420M1178 416L1186 428M1059 587.500H1109"/>
    <path class="gd" d="M1008 436.500h.01M1013 436.500h.01M1018 436.500h.01M1023 436.500h.01M1027 436.500h.01M1032 436.500h.01M1036 436.500h.01M1147 436.500h.01M1152 436.500h.01M1156 436.500h.01M1161 436.500h.01M1165 436.500h.01M1170 436.500h.01M1174 436.500h.01"/>
    <path class="cd" d="M1005 431h.01M1021 431h.01M1036 431h.01M1053 431h.01M1069 431h.01M1084 431h.01M1100 431h.01M1115 431h.01M1130 431h.01M1147 431h.01M1162 431h.01M1178 431h.01"/>
    <g class="wt">
      <text x="1014" y="411">分布筋</text>
      <text x="1053" y="418">分布筋</text>
      <text x="1131" y="424">桩间连接筋</text>
      <text x="1113" y="460">桩间连接筋</text>
      <text transform="translate(989 512) rotate(-90)">桩间连接筋弯折</text>
      <text transform="translate(1204 484) rotate(-90)">分布筋弯折</text>
      <text transform="translate(1165 412) rotate(-90)">侧面筋</text>
    </g>
    <g class="gt">
      <text transform="translate(971 428) rotate(-90)">500</text>
      <text transform="translate(984 426) rotate(-90)">0</text>
      <text transform="translate(1057 454) rotate(-90)">100</text>
      <text transform="translate(1211 428) rotate(-90)">10*d</text>
      <text transform="translate(1176 415) rotate(-90)">C12@200</text>
    </g>
    <text class="oneone" x="1084" y="585">1-1</text>
  </svg>
  <div class="dlgfoot"><span class="okbtn">配筋形式</span></div>
</div>

<div class="sogou">
  <span class="slogo">S</span>
  <span class="sbar">
    <b class="sz">中</b>
    <span class="sz2">°,</span>
    <svg class="si" viewBox="0 0 16 16"><circle cx="8" cy="8" r="7" fill="none" stroke="#1a78c8" stroke-width="1.500"/><circle cx="5.500" cy="6.500" r="1.300" fill="#1a78c8"/><circle cx="10.500" cy="6.500" r="1.300" fill="#1a78c8"/><path d="M4.500 10q3.500 3 7 0" fill="none" stroke="#1a78c8" stroke-width="1.300"/></svg>
    <svg class="si" viewBox="0 0 16 16"><rect x="5" y="1" width="6" height="9" rx="3" fill="#1a78c8"/><path d="M3 7a5 5 0 0 0 10 0M8 12v3M5 15h6" fill="none" stroke="#1a78c8" stroke-width="1.300"/></svg>
    <svg class="si" viewBox="0 0 16 16"><rect y="2" width="16" height="12" rx="2" fill="#1a78c8"/><path d="M2 5h12M2 8h12" stroke="#fff" stroke-dasharray="1.500 1"/><path d="M4 11h8" stroke="#fff"/></svg>
    <svg class="si" viewBox="0 0 16 16"><circle cx="7" cy="4" r="3" fill="#aab4bd"/><path d="M1 15c0-5 3-6 6-6h2v6z" fill="#aab4bd"/><rect x="8" y="10" width="8" height="6" fill="#fff" stroke="#aab4bd"/></svg>
    <svg class="si" viewBox="0 0 16 16"><path d="M4 1L1 3l1 4 2-1v9h8V6l2 1 1-4-3-2-2 1H6z" fill="#1a78c8"/></svg>
    <svg class="si" viewBox="0 0 16 16"><path d="M15 3l-3 3-2-1-1-2 3-3c-3-1-6 2-5 5L1 11c-1 2 2 5 4 4l6-6c3 1 6-2 4-6z" fill="#1a78c8"/></svg>
  </span>
</div>
<div class="badge"><span>56</span></div>
</body>
</html>
```
FILE: styles.css
```css
* { box-sizing: border-box; }
html, body { margin: 0; padding: 0; }
body {
  width: 1366px; height: 768px; overflow: hidden; position: relative;
  display: flex; flex-direction: column; background: #f0f0f0; color: #111;
  font: 12px/16px "Liberation Sans", "Noto Sans CJK SC", sans-serif;
}
i { font-style: normal; }
.defs { position: absolute; }
.m { font: 11px/16px "Liberation Mono", monospace; letter-spacing: -.7px; }

.ml1{margin-left:1px}.ml2{margin-left:2px}.ml3{margin-left:3px}.ml4{margin-left:4px}.ml5{margin-left:5px}.ml6{margin-left:6px}.ml7{margin-left:7px}.ml8{margin-left:8px}.ml9{margin-left:9px}.ml10{margin-left:10px}.ml11{margin-left:11px}.ml13{margin-left:13px}.ml15{margin-left:15px}.ml17{margin-left:17px}.ml18{margin-left:18px}.ml19{margin-left:19px}.ml20{margin-left:20px}.ml30{margin-left:30px}.ml39{margin-left:39px}.ml64{margin-left:64px}

.titlebar { height: 25px; background: #fff; display: flex; align-items: center; padding-left: 2px; }
.appicon { width: 15px; height: 15px; }
.wintitle { margin-left: 5px; color: #888; font-size: 12.700px; white-space: nowrap; flex: 1; overflow: hidden; }
.wincontrols { display: flex; width: 118px; gap: 34px; padding-left: 1px; }
.wincontrols svg { width: 12px; height: 12px; }

.menubar { height: 29px; background: #f8f8f8; display: flex; align-items: center; padding: 0 3px 1px 7px; white-space: nowrap; }
.mi { flex: none; }
.teal { color: #0b6a7c; margin-left: 36px; }
.avatar { margin-left: 32px; }
.phone { letter-spacing: .2px; }
.ic { width: 16px; height: 16px; flex: none; }
.car { width: 0; height: 0; flex: none; border: 3.500px solid transparent; border-top: 4px solid #222; border-bottom: 0; display: inline-block; }
.graycar { border-top-color: #888; }
.more { width: 9px; flex: none; font-weight: 700; font-size: 12px; line-height: 12px; margin-top: -8px; }
.push { margin-left: auto; }

.toolbars { height: 27px; display: flex; background: #f0f0f0; white-space: nowrap; }
.chunk { display: flex; align-items: center; background: #f8f8f8; border-radius: 3px; flex: none; }
.chunk1 { width: 150px; }
.chunk2 { width: 547px; margin-left: 3px; }
.chunk3 { flex: 1; margin-left: 2px; }
.tx { flex: none; }
.off { color: #8a8a8a; }
.dis { opacity: .8; }
.sep { width: 1px; height: 22px; background: #bbb; flex: none; }
.sigma { width: 10px; flex: none; font: 700 14px/16px "DejaVu Sans", sans-serif; }
.combo { width: 62px; height: 22px; border: 1px solid #777; background: #f4f4f4; display: flex; align-items: center; padding-left: 3px; flex: none; }
.swatch { width: 14px; height: 14px; background: #e4e4e4; border: 1px solid #bbb; }

.main { flex: 1; display: flex; min-height: 0; padding-top: 3px; }
.nav { width: 170px; margin-right: 6px; display: flex; flex-direction: column; flex: none; }
.navhead { height: 17px; display: flex; align-items: center; background: #f6f6f6; }
.navtitle { font-size: 12.500px; flex: 1; }
.navbtn { width: 10px; height: 11px; }
.pin { margin-right: 8px; }
.close { margin-right: 4px; }
.navtab { height: 22px; margin-left: 1px; background: #f0f0f0; border: 1px solid #a8a8a8; border-radius: 2px; text-align: center; line-height: 20px; flex: none; }
.navhead + .navtab { margin-top: 1px; }
.navtab-l { height: 21px; line-height: 19px; }
.navtools { height: 28px; background: #f8f8f8; display: flex; align-items: center; padding: 0 0 0 7px; flex: none; }
.pm { width: 16px; height: 15px; }
.treebox { height: 487px; margin: 0 2px 0 2px; background: #fff; border: 1px solid #a0a0a0; border-width: 1px 2px 1px 1px; display: flex; padding-top: 1px; flex: none; overflow: hidden; }
.navtab-b { margin-top: 1px; }
.tree { width: 148px; flex: none; overflow: hidden; font: 11px/16px "Liberation Mono", "Noto Sans CJK SC", monospace; }
.tr { height: 16px; display: flex; align-items: center; white-space: nowrap; color: #111; }
.chev { width: 10px; height: 10px; margin-left: 8px; flex: none; }
.fold { width: 16px; height: 16px; margin-left: 6px; flex: none; }
.lab { margin-left: 4px; font-size: 12px; }
.ch {
  --dot: repeating-linear-gradient(#777 0 1px, transparent 1px 2px);
  background:
    var(--dot) 12px 0 / 1px 100% no-repeat,
    var(--dot) 31px 0 / 1px 100% no-repeat,
    repeating-linear-gradient(90deg, #777 0 1px, transparent 1px 2px) 31px 8px / 12px 1px no-repeat;
}
.ch.last {
  background:
    var(--dot) 12px 0 / 1px 100% no-repeat,
    var(--dot) 31px 0 / 1px 8px no-repeat,
    repeating-linear-gradient(90deg, #777 0 1px, transparent 1px 2px) 31px 8px / 12px 1px no-repeat;
}
.ti { width: 14px; height: 14px; margin-left: 43px; flex: none; }
.clab { margin-left: 6px; }
.hit .clab { background: #dcdcdc; margin-left: 0; padding: 0 5px 0 6px; height: 16px; }
.sb { width: 16px; background: #f0f0f0; display: flex; flex-direction: column; align-items: center; flex: none; margin-left: auto; }
.sba { width: 10px; height: 10px; margin: 3px 0; flex: none; }
.flip { transform: rotate(180deg); }
.thumb { width: 100%; background: #cdcdcd; margin-top: 3px; flex: none; }
.th1 { height: 422px; margin-bottom: 26px; }
.th2 { height: 112px; margin-top: 417px; }

.work { flex: 1; min-width: 0; display: flex; flex-direction: column; }
.tb2 { height: 27px; background: #f8f8f8; display: flex; align-items: center; white-space: nowrap; flex: none; }
.floor { width: 62px; height: 24px; background: #fff; display: flex; align-items: center; flex: none; }
.panes { flex: 1; display: flex; min-height: 0; }
.col2 { width: 183px; flex: none; display: flex; flex-direction: column; }
.searchrow { height: 32px; padding: 7px 0 1px 1px; display: flex; align-items: center; flex: none; }
.searchbox { width: 156px; height: 24px; border: 1px solid #888; background: #fff; color: #888; padding-left: 3px; line-height: 22px; font-size: 12px; }
.searchic { width: 14px; height: 14px; margin-left: 7px; }
.ctbox { flex: 1; background: #fff; border: 1px solid #a0a0a0; border-top-width: 2px; border-right-width: 1px; display: flex; overflow: hidden; }
.ctree { width: 164px; flex: none; font: 11px/16px "Liberation Mono", monospace; letter-spacing: -.8px; color: #111; }
.cp { height: 16px; display: flex; align-items: center; white-space: nowrap;
  background: repeating-linear-gradient(90deg, #777 0 1px, transparent 1px 2px) 35px 8px / 7px 1px no-repeat;
}
.cp .chev { margin-left: 26px; }
.gear { width: 12px; height: 12px; flex: none; }
.cp .gear { margin-left: 9px; }
.cpl { margin-left: 7px; }
.cc { height: 16px; display: flex; align-items: center; white-space: nowrap;
  background:
    repeating-linear-gradient(#777 0 1px, transparent 1px 2px) 31px 0 / 1px 100% no-repeat,
    repeating-linear-gradient(#777 0 1px, transparent 1px 2px) 50px 0 / 1px 8px no-repeat,
    repeating-linear-gradient(90deg, #777 0 1px, transparent 1px 2px) 50px 8px / 12px 1px no-repeat;
}
.cclast {
  background:
    repeating-linear-gradient(#777 0 1px, transparent 1px 2px) 50px 0 / 1px 8px no-repeat,
    repeating-linear-gradient(90deg, #777 0 1px, transparent 1px 2px) 50px 8px / 9px 1px no-repeat;
}
.cc .gear { margin-left: 62px; }
.di { display: inline-block; width: 23px; font: 12px/14px "Noto Sans CJK SC", sans-serif; letter-spacing: 0; margin-left: 9px; height: 16px; }
.sel { display: flex; align-items: center; background: #2f63c0; color: #fff; height: 16px; width: 93px; margin-left: 59px; }
.cc .sel .gear { margin-left: 3px; }

.col3 { flex: 1; margin: 0 6px 5px 7px; display: flex; flex-direction: column; min-width: 0; position: relative; background: #f0f0f0; }
.tabs { height: 21px; margin-top: 1px; border-bottom: 1px solid #d0d0d0; flex: none; background: #fff; display: flex; }
.tab { width: 60px; height: 21px; border: 1px solid #d0d0d0; border-bottom: 0; background: #fff; padding-left: 4px; line-height: 19px; font-size: 12.500px; }
.tablebox { flex: 1; margin: 4px 0 0 0; background: #fff; border: 1px solid #c0c0c0; padding: 1px 0 0 1px; }
.grid { display: grid; grid-template-columns: 21px 191px 125px 31px; grid-auto-rows: 19px; grid-template-rows: 22px; width: 368px; }
.grid > div { border-right: 1px solid #c4c4c4; border-bottom: 1px solid #c4c4c4; white-space: nowrap; overflow: hidden; line-height: 18px; }
.hc { background: linear-gradient(#fbfbfb, #e9e9e9); text-align: center; line-height: 21px !important; }
.hv { background: linear-gradient(#fce3ae, #f4c676); color: #7a1f7a; }
.hx { background: #fff; text-align: left; padding-left: 3px; }
.num { background: linear-gradient(#fafafa, #ebebeb); text-align: center; font: 11px/18px "Liberation Mono", monospace; letter-spacing: -.7px; }
.nm { padding-left: 20px; }
.val { padding-left: 2px; font: 11px/18px "Liberation Mono", monospace; letter-spacing: -.7px; }
.cj { font: 12px/18px "Liberation Sans", "Noto Sans CJK SC", sans-serif; letter-spacing: 0; }
.blue { color: #0000e6; }
.gray { color: #8a8a8a; }
.cur { background: #fde6bd; color: #6a106a; }
.selrow { background: #0078d7; color: #fff; padding-left: 2px; display: flex; align-items: center; }
.selval { background: #d5e8f8; }
.plus { width: 12px; height: 12px; background: #fff; border: 1px solid #333; color: #111; font: 12px/9px "Liberation Mono", monospace; letter-spacing: 0; text-align: center; margin: 0 6px 0 1px; }

.status { height: 20px; margin-top: 1px; display: flex; gap: 3px; background: #f0f0f0; flex: none; }
.cell { background: #f8f8f8; height: 20px; border: 1px solid #e6e6e6; line-height: 18px; white-space: nowrap; overflow: hidden; padding-left: 1px; flex: none; }
.c0 { width: 148px; }
.c1 { width: 77px; }
.c2 { width: 97px; }
.c3 { width: 47px; }
.c4 { width: 913px; }
.c5 { width: 69px; }

.taskbar { height: 40px; margin-top: 1px; background: #05111a; display: flex; align-items: center; flex: none; color: #eee; }
.start { width: 48px; height: 40px; background: #000; display: flex; align-items: center; justify-content: center; flex: none; }
.win { width: 16px; height: 16px; }
.search { width: 344px; height: 40px; background: #333; display: flex; align-items: center; flex: none; padding-left: 9px; }
.cort { width: 22px; height: 22px; flex: none; }
.searchtx { margin-left: 5px; color: #8c8c8c; font-size: 14px; width: 282px; white-space: nowrap; }
.mic { width: 12px; height: 20px; flex: none; }
.tk { width: 48px; height: 40px; display: flex; align-items: center; justify-content: center; flex: none; position: relative; }
.tki { width: 22px; height: 22px; }
.swoosh { position: absolute; left: 12px; top: 8px; width: 24px; height: 24px; }
.ebig { color: #eee; font: 700 30px/36px "Liberation Sans", sans-serif; }
.eedge { color: #0a78e0; font: 700 32px/36px "Liberation Sans", sans-serif; }
.eie { color: #3aa8f0; font: 700 32px/36px "Liberation Sans", sans-serif; }
.under { border-bottom: 2px solid #76b9ed; width: 46px; margin-left: 2px; }
.under2 { border-bottom: 2px solid #76b9ed; width: 40px; }
.tkactive { background: #2f3c44; border-bottom: 2px solid #76b9ed; }
.gldt { width: 24px; height: 24px; }
.tray { display: flex; align-items: center; flex: none; white-space: nowrap; }
.tt, .cpu, .clock, .zh { color: #eee; }
.cpu, .clock { display: flex; flex-direction: column; align-items: center; line-height: 19px; }
.cpu b, .clock b { font-weight: 400; }
.clock { font-size: 13px; }
.tr-i { flex: none; }
.chevup { width: 12px; height: 8px; }
.batt { width: 18px; height: 14px; }
.wifi { width: 15px; height: 14px; }
.spk { width: 16px; height: 14px; }
.kbd { width: 23px; height: 14px; }
.zh { font-weight: 700; font-size: 13px; }
.sgs { width: 17px; height: 17px; border-radius: 3px; background: #f4551e; color: #fff; font: 700 13px/17px "Liberation Sans", sans-serif; text-align: center; }
.note { width: 16px; height: 18px; }

.dialog { position: absolute; left: 622px; top: 151px; width: 630px; height: 555px; background: linear-gradient(#9bb5d2 0, #b9d1ea 32px); border: 1px solid #3a4754; padding: 0 7px 8px 7px; display: flex; flex-direction: column; }
.dlgtitle { height: 31px; line-height: 40px; font-size: 12px; flex: none; text-shadow: 0 0 4px #dce8f5; }
.radios { height: 33px; background: #efefef; display: flex; align-items: center; padding-left: 95px; flex: none; }
.radio { width: 13px; height: 13px; border: 1px solid #555; border-radius: 50%; background: #fff; flex: none; }
.radio.on { background: radial-gradient(circle, #333 0 3.500px, #fff 4px); }
.radio.second { margin-left: 164px; }
.rlab { margin-left: 3px; width: 72px; white-space: nowrap; }
.cad { width: 614px; height: 437px; background: #000; flex: none; display: block; shape-rendering: crispEdges; }
.dlgfoot { flex: 1; background: #efefef; display: flex; justify-content: flex-end; padding: 12px 26px 0 0; border-bottom: 1px solid #aaa; }
.okbtn { width: 73px; height: 23px; border: 2px solid #0078d7; background: #e4e4e4; text-align: center; line-height: 19px; }

.wl { fill: none; stroke: #fff; stroke-width: 1; }
.wd { fill: none; stroke: #fff; stroke-width: 1; stroke-dasharray: 3 2; }
.yl { fill: none; stroke: #ffff00; stroke-width: 1; }
.mg { fill: none; stroke: #ff00ff; stroke-width: 1; }
.cy { fill: none; stroke: #00ffff; stroke-width: 1; }
.mg2 { fill: none; stroke: #ff00ff; stroke-width: 2; }
.yl2 { fill: none; stroke: #ffff00; stroke-width: 2; }
.gd { fill: none; stroke: #00ff00; stroke-width: 3; stroke-linecap: round; }
.cd { fill: none; stroke: #00ffff; stroke-width: 2; stroke-linecap: round; }
.wt text { fill: #e8e8e8; font: 11px "Noto Sans CJK SC", sans-serif; }
.gt text { fill: #00dd00; font: 11px "Liberation Sans", sans-serif; }
.one { fill: #fff; font: 24px "Liberation Serif", serif; text-anchor: middle; }
.bigt { fill: #fff; font: 300 27px "Noto Sans CJK SC", sans-serif; }
.oneone { fill: #fff; font: 30px "Liberation Serif", serif; text-anchor: middle; letter-spacing: 1px; }

.sogou { position: absolute; left: 745px; top: 3px; display: flex; align-items: center; }
.slogo { width: 21px; height: 21px; background: #f4551e; border-radius: 4px; color: #fff; font: 700 18px/21px "Liberation Sans", sans-serif; text-align: center; flex: none; position: relative; z-index: 1; transform: rotate(-6deg); }
.sbar { margin-left: -3px; width: 186px; height: 23px; background: #fff; border: 1px solid #a8c0d4; display: flex; align-items: center; padding-left: 12px; gap: 7px; }
.sz { color: #1a78c8; font-size: 14px; width: 15px; }
.sz2 { color: #1a78c8; font-weight: 700; width: 14px; margin-left: 1px; }
.si { width: 15px; height: 15px; flex: none; }
.badge { position: absolute; left: 1114px; top: -31px; width: 48px; height: 48px; border-radius: 50%; background: #2db84d; box-shadow: 0 0 0 1px #aaa, inset 0 -3px 0 #e8e8e8; color: #fff; font: 700 12px/14px "Liberation Sans", sans-serif; text-align: center; padding-top: 31px; }
```
